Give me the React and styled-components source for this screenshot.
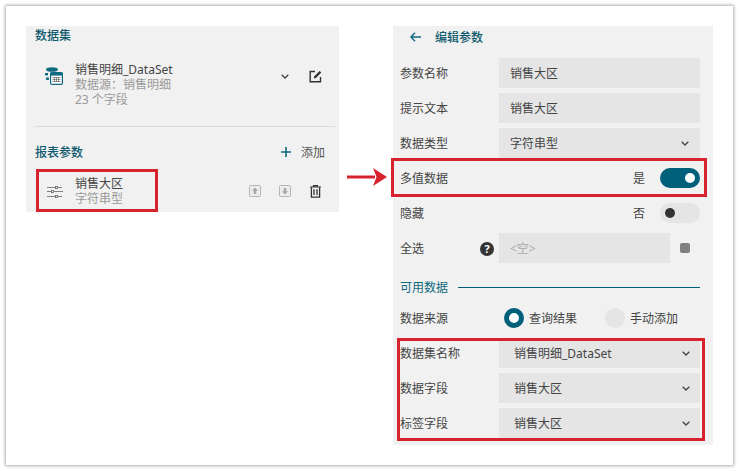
import React from "react";
import styled, { createGlobalStyle } from "styled-components";

const GlobalStyle = createGlobalStyle`
  html, body {
    margin: 0;
    padding: 0;
    background: #fff;
    font: normal 12px/15px "Noto Sans", "Noto Sans CJK SC", sans-serif;
    color: #3a3a3a;
  }
`;

const TEAL = "#00607a";

const Frame = styled.div`
  position: relative;
  box-sizing: border-box;
  width: 727px;
  height: 459px;
  margin: 6px;
  padding: 20px;
  display: flex;
  align-items: flex-start;
  gap: 54px;
  background: #fff;
  box-shadow: 0 0 3px 1px rgba(0, 0, 0, 0.32);
`;

const Panel = styled.div`
  box-sizing: border-box;
  flex: none;
  width: ${(p) => p.$width}px;
  height: ${(p) => p.$height}px;
  background: #f1f1f1;
  display: flex;
  flex-direction: column;
`;

const SectionTitle = styled.div`
  color: #0f5a6e;
  font-weight: 500;
  height: 18px;
  line-height: 20px;
`;

const LeftBody = styled.div`
  padding: 0 4px 0 9px;
  display: flex;
  flex-direction: column;
`;

const DataSetRow = styled.div`
  display: flex;
  align-items: flex-start;
  height: 45px;
  margin-top: 18px;
  padding-left: 10px;
`;

const RowText = styled.div`
  margin-left: 12px;
  flex: 1;
  display: flex;
  flex-direction: column;
`;

const Primary = styled.div`
  color: #444;
`;

const Muted = styled.div`
  color: #9a9a9a;
`;

const IconSlot = styled.div`
  flex: none;
  display: flex;
  align-items: center;
  justify-content: center;
  width: ${(p) => p.$w || 16}px;
  height: ${(p) => p.$h || 28}px;
  margin-left: ${(p) => p.$ml || 0}px;
`;

const Divider = styled.div`
  height: 1px;
  background: #d9d9d9;
  margin-top: 19px;
`;

const ParamHeader = styled.div`
  display: flex;
  align-items: center;
  justify-content: space-between;
  margin-top: 16px;
  padding-right: 10px;
`;

const AddButton = styled.div`
  display: flex;
  align-items: center;
  gap: 10px;
  color: #555;
`;

const ParamRow = styled.div`
  display: flex;
  align-items: center;
  height: 30px;
  margin-top: 15px;
  padding-left: 12px;
`;

const ParamActions = styled.div`
  display: flex;
  align-items: center;
  gap: 14px;
  margin-right: 14px;
`;

const TitleBar = styled.div`
  display: flex;
  align-items: center;
  gap: 14px;
  height: 22px;
  padding-left: 17px;
  margin-bottom: 10px;
  color: #0f5a6e;
  font-weight: 500;
`;

const Rows = styled.div`
  display: flex;
  flex-direction: column;
  gap: 5px;
  padding: 0 13px 0 7px;
`;

const Row = styled.div`
  display: flex;
  align-items: center;
  height: 30px;
  color: #444;
`;

const Label = styled.div`
  width: 99px;
  flex: none;
  padding-top: 1px;
`;

const Field = styled.div`
  box-sizing: border-box;
  flex: 1;
  height: 30px;
  display: flex;
  align-items: center;
  justify-content: space-between;
  padding: 0 ${(p) => (p.$pad ? 10 : 11)}px 0 ${(p) => (p.$pad ? 15 : 11)}px;
  background: #e5e5e5;
  color: ${(p) => (p.$empty ? "#aaa" : "#444")};
`;

const Value = styled.div`
  margin-left: auto;
  margin-right: 15px;
`;

const Toggle = styled.div`
  box-sizing: border-box;
  width: 40px;
  height: 20px;
  border-radius: 10px;
  padding: 0 5px;
  display: flex;
  align-items: center;
  justify-content: ${(p) => (p.$on ? "flex-end" : "flex-start")};
  background: ${(p) => (p.$on ? TEAL : "#e5e5e5")};
`;

const Knob = styled.div`
  width: 10px;
  height: 10px;
  border-radius: 50%;
  background: ${(p) => (p.$on ? "#fff" : "#333")};
`;

const HelpLabel = styled(Label)`
  display: flex;
  align-items: center;
  justify-content: space-between;
  padding-right: 5px;
  box-sizing: border-box;
`;

const Help = styled.div`
  width: 14px;
  height: 14px;
  border-radius: 50%;
  background: #333;
  color: #fff;
  font-size: 11px;
  font-weight: 700;
  line-height: 14px;
  text-align: center;
`;

const Square = styled.div`
  width: 10px;
  height: 10px;
  border-radius: 2px;
  margin: 0 10px;
  background: #808080;
  flex: none;
`;

const SectionRow = styled.div`
  display: flex;
  align-items: center;
  gap: 10px;
  height: 20px;
  margin: 9px 0 1px;
  color: #0f6a80;
`;

const SectionLine = styled.div`
  flex: 1;
  height: 1px;
  background: ${TEAL};
`;

const RadioGroup = styled.div`
  display: flex;
  align-items: center;
  margin-left: 5px;
`;

const Radio = styled.div`
  box-sizing: border-box;
  width: 20px;
  height: 20px;
  border-radius: 50%;
  margin-right: 5px;
  background: ${(p) => (p.$on ? "#fff" : "#e5e5e5")};
  border: ${(p) => (p.$on ? `5px solid ${TEAL}` : "none")};
`;

const RadioText = styled.div`
  margin-right: ${(p) => p.$mr || 0}px;
`;

const Highlight = styled.div`
  position: absolute;
  box-sizing: border-box;
  left: ${(p) => p.$x}px;
  top: ${(p) => p.$y}px;
  width: ${(p) => p.$w}px;
  height: ${(p) => p.$h}px;
  border: 3px solid #d8232f;
`;

const Arrow = styled.svg`
  position: absolute;
  left: 341px;
  top: 162px;
`;

const Chevron = ({ color = "#444" }) => (
  <svg width="8" height="5" viewBox="0 0 8 5" fill="none">
    <path d="M.7.7L4 4l3.3-3.3" stroke={color} strokeWidth="1.3" />
  </svg>
);

const DataSetIcon = () => (
  <svg width="18" height="18" viewBox="0 0 18 18">
    <ellipse cx="7" cy="2.5" rx="6" ry="2.3" fill="#0f6a80" />
    <rect x="0" y="6" width="3" height="2.4" fill="#0f6a80" />
    <rect x="1" y="10.5" width="3" height="2.4" fill="#0f6a80" />
    <rect x="5.6" y="5.6" width="11.8" height="11.8" rx="1.2" fill="#fff" stroke="#0f6a80" strokeWidth="1.2" />
    <rect x="5.6" y="5.6" width="11.8" height="3" fill="#0f6a80" />
    <path d="M7.5 10.5h8M7.5 12.5h8M7.5 14.5h8M9.5 10v5M11.5 10v5M13.5 10v5" stroke="#777" strokeWidth="0.8" />
  </svg>
);

const EditIcon = () => (
  <svg width="13" height="13" viewBox="0 0 13 13" fill="none">
    <path d="M11.5 7v4.8H1.2V1.5H6" stroke="#333" strokeWidth="1.4" />
    <path d="M4.8 8.4l.5-2.2L10.6.9l1.7 1.7L7 7.9z" fill="#333" />
  </svg>
);

const SlidersIcon = () => (
  <svg width="16" height="13" viewBox="0 0 16 13" fill="none" stroke="#666" strokeWidth="0.8">
    <path d="M0 2.5h8M11 2.5h4M0 6.5h4M7 6.5h9M0 11.5h8M11 11.5h4" />
    <rect x="8.5" y="1.4" width="2" height="2.2" />
    <rect x="4.5" y="5.4" width="2" height="2.2" />
    <rect x="8.5" y="10.4" width="2" height="2.2" />
  </svg>
);

const MoveIcon = ({ down }) => (
  <svg width="12" height="12" viewBox="0 0 12 12">
    <rect x="0.5" y="0.5" width="11" height="11" rx="1" fill="#ececec" stroke="#b5b5b5" />
    <path d={down ? "M6 9.5L3 6.2h1.8V3h2.4v3.2H9z" : "M6 2.5L9 5.8H7.2V9H4.8V5.8H3z"} fill="#a5a5a5" />
  </svg>
);

const TrashIcon = () => (
  <svg width="11" height="13" viewBox="0 0 11 13" fill="none" stroke="#333">
    <path d="M0 2h11M3.5 2V.7h4V2" strokeWidth="1.2" />
    <path d="M1.4 2.2v10h8.2v-10" strokeWidth="1.3" />
    <path d="M4 4.3v5.8M7 4.3v5.8" strokeWidth="1.3" />
  </svg>
);

const Select = ({ children, pad }) => (
  <Field $pad={pad}>
    <span>{children}</span>
    <Chevron />
  </Field>
);

export default function App() {
  return (
    <>
      <GlobalStyle />
      <Frame>
        <Panel $width={313} $height={186}>
          <LeftBody>
            <SectionTitle>数据集</SectionTitle>
            <DataSetRow>
              <IconSlot $w={18}><DataSetIcon /></IconSlot>
              <RowText>
                <Primary>销售明细_DataSet</Primary>
                <Muted>数据源：销售明细</Muted>
                <Muted>23 个字段</Muted>
              </RowText>
              <IconSlot $w={10}><Chevron /></IconSlot>
              <IconSlot $w={13} $ml={19}><EditIcon /></IconSlot>
              <IconSlot $w={13} />
            </DataSetRow>
            <Divider />
            <ParamHeader>
              <SectionTitle>报表参数</SectionTitle>
              <AddButton>
                <svg width="10" height="10" viewBox="0 0 10 10">
                  <path d="M5 0v10M0 5h10" stroke="#0f6a80" strokeWidth="1.6" />
                </svg>
                添加
              </AddButton>
            </ParamHeader>
            <ParamRow>
              <SlidersIcon />
              <RowText>
                <Primary>销售大区</Primary>
                <Muted>字符串型</Muted>
              </RowText>
              <ParamActions>
                <IconSlot $w={12} $h={14}><MoveIcon /></IconSlot>
                <IconSlot $w={12} $h={14} $ml={4}><MoveIcon down /></IconSlot>
                <IconSlot $w={12} $h={14} $ml={4}><TrashIcon /></IconSlot>
              </ParamActions>
            </ParamRow>
          </LeftBody>
        </Panel>

        <Panel $width={320} $height={419}>
          <TitleBar>
            <svg width="11" height="10" viewBox="0 0 11 10" fill="none" stroke="#0f6a80" strokeWidth="1.4">
              <path d="M11 5H1M5 .8L1 5l4 4.2" />
            </svg>
            编辑参数
          </TitleBar>
          <Rows>
            <Row>
              <Label>参数名称</Label>
              <Field>销售大区</Field>
            </Row>
            <Row>
              <Label>提示文本</Label>
              <Field>销售大区</Field>
            </Row>
            <Row>
              <Label>数据类型</Label>
              <Select>字符串型</Select>
            </Row>
            <Row>
              <Label>多值数据</Label>
              <Value>是</Value>
              <Toggle $on><Knob $on /></Toggle>
            </Row>
            <Row>
              <Label>隐藏</Label>
              <Value>否</Value>
              <Toggle><Knob /></Toggle>
            </Row>
            <Row>
              <HelpLabel>
                全选
                <Help>?</Help>
              </HelpLabel>
              <Field $empty>&lt;空&gt;</Field>
              <Square />
            </Row>
            <SectionRow>
              可用数据
              <SectionLine />
            </SectionRow>
            <Row>
              <Label>数据来源</Label>
              <RadioGroup>
                <Radio $on />
                <RadioText $mr={28}>查询结果</RadioText>
                <Radio />
                <RadioText>手动添加</RadioText>
              </RadioGroup>
            </Row>
            <Row>
              <Label>数据集名称</Label>
              <Select pad>销售明细_DataSet</Select>
            </Row>
            <Row>
              <Label>数据字段</Label>
              <Select pad>销售大区</Select>
            </Row>
            <Row>
              <Label>标签字段</Label>
              <Select pad>销售大区</Select>
            </Row>
          </Rows>
        </Panel>

        <Highlight $x={30} $y={163} $w={122} $h={43} />
        <Highlight $x={385} $y={152} $w={316} $h={39} />
        <Highlight $x={391} $y={332} $w={308} $h={103} />
        <Arrow width="40" height="18" viewBox="0 0 40 18">
          <path d="M0 7.5h28v3H0z" fill="#d8232f" />
          <path d="M26 0l14 9-14 9 3.5-9z" fill="#d8232f" />
        </Arrow>
      </Frame>
    </>
  );
}
